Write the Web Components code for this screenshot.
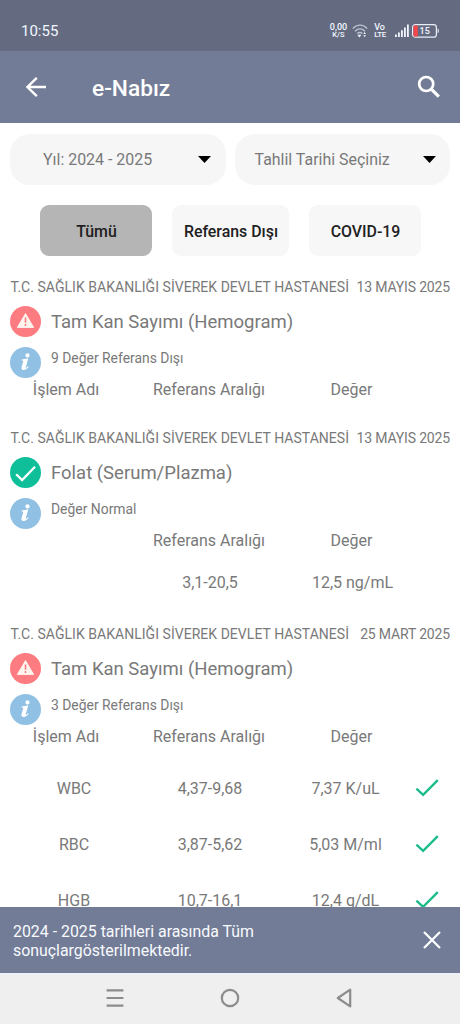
<!DOCTYPE html>
<html lang="tr">
<head>
<meta charset="UTF-8">
<meta name="viewport" content="width=device-width, initial-scale=1">
<title>e-Nabız</title>
<style>
    body {
        margin: 0;
        height: 1024px;
        overflow: hidden;
        background: #fff;
        color: #797979;
        font-family: Roboto, "Liberation Sans", sans-serif;
    }
</style>
</head>
<body>
<nabiz-app>
    <status-bar slot="top" time="10:55"></status-bar>
    <app-bar slot="top">e-Nabız</app-bar>

    <select-box slot="filters" style="--w: 216px; --pad: 33px; --caret: 15px">Yıl: 2024 - 2025</select-box>
    <select-box slot="filters" style="--w: 215px; --pad: 19.5px; --caret: 14px">Tahlil Tarihi Seçiniz</select-box>

    <filter-chip slot="chips" active style="--w: 112px">Tümü</filter-chip>
    <filter-chip slot="chips" style="--w: 117px">Referans Dışı</filter-chip>
    <filter-chip slot="chips" style="--w: 112px">COVID-19</filter-chip>

    <result-card hospital="T.C. SAĞLIK BAKANLIĞI SİVEREK DEVLET HASTANESİ" date="13 MAYIS 2025"
        name="Tam Kan Sayımı (Hemogram)" note="9 Değer Referans Dışı" state="warn" first-col="İşlem Adı"></result-card>

    <result-card hospital="T.C. SAĞLIK BAKANLIĞI SİVEREK DEVLET HASTANESİ" date="13 MAYIS 2025"
        name="Folat (Serum/Plazma)" note="Değer Normal" state="ok">
        <result-row range="3,1-20,5" value="12,5 ng/mL" style="--row: 28px; --shift: 18px; --value: 161px"></result-row>
    </result-card>

    <result-card hospital="T.C. SAĞLIK BAKANLIĞI SİVEREK DEVLET HASTANESİ" date="25 MART 2025"
        name="Tam Kan Sayımı (Hemogram)" note="3 Değer Referans Dışı" state="warn" first-col="İşlem Adı">
        <result-row name="WBC" range="4,37-9,68" value="7,37 K/uL" checked style="--shift: 13px"></result-row>
        <result-row name="RBC" range="3,87-5,62" value="5,03 M/ml" checked></result-row>
        <result-row name="HGB" range="10,7-16,1" value="12,4 g/dL" checked></result-row>
    </result-card>

    <snack-bar slot="bottom">2024 - 2025 tarihleri arasında Tüm sonuçlargösterilmektedir.</snack-bar>
    <nav-bar slot="bottom"></nav-bar>
</nabiz-app>

<script>
/**
 * e-Nabız - Lab results screen
 */

const icons = {
    warn: `<svg width="31" height="31" viewBox="0 0 31 31">
        <circle cx="15.5" cy="15.5" r="15.5" fill="#fd7c81"/>
        <path d="M15.5 7.6 23.6 21.4H7.4Z" fill="#fff4ee" stroke="#fff4ee" stroke-width="1" stroke-linejoin="round"/>
        <path d="M15.5 11.6v5.2M15.5 18.1v1.8" stroke="#fd7c81" stroke-width="1.6"/>
    </svg>`,
    ok: `<svg width="31" height="31" viewBox="0 0 31 31">
        <circle cx="15.5" cy="15.5" r="15.5" fill="#0fbf9a"/>
        <path d="M6.2 17.2l5.9 5.8L25 9.8" fill="none" stroke="#fff" stroke-width="2.3"/>
    </svg>`,
    info: `<svg width="31" height="31" viewBox="0 0 31 31">
        <circle cx="15.5" cy="15.5" r="15.5" fill="#90c0e3"/>
        <circle cx="17.5" cy="8.4" r="2.1" fill="#fff"/>
        <path d="M11.6 12.4c2.2-.1 4.4-.5 6.7-1.1l-2.6 9.2c-.1.7.4.6.9.1l1.4-1.4.7.6c-1.4 2-3.1 3.2-5 3.2-1.9 0-2.6-1-2.2-2.7l1.7-5.7c.2-.9-.3-1.1-1.6-1.2z" fill="#fff"/>
    </svg>`,
    check: `<svg width="24" height="20" viewBox="0 0 24 20">
        <path d="M1.4 10.6l6.7 6.2L22.8 2.2" fill="none" stroke="#1cbc8c" stroke-width="2.4"/>
    </svg>`
};

class StatusBar extends HTMLElement {
    constructor() {
        super();
        this.attachShadow({ mode: 'open' });
    }

    connectedCallback() {
        this.shadowRoot.innerHTML = `
            <style>
                :host {
                    display: flex;
                    align-items: center;
                    box-sizing: border-box;
                    height: 51px;
                    padding: 10px 20px 0 21px;
                    background: #646b80;
                    color: #f2f7ff;
                }
                .time { flex: 1; font-size: 15px; }
                .pair {
                    display: flex;
                    flex-direction: column;
                    align-items: center;
                    font-size: 9px;
                    line-height: 8px;
                    font-weight: 500;
                }
                .small { font-size: 7.5px; }
                .lte { align-items: flex-start; margin: 0 9px 0 6px; }
                .lte .small { font-size: 8px; letter-spacing: -0.3px; }
                .wifi { margin-left: 5px; }
                .battery { margin-left: 3px; }
                svg { display: block; }
            </style>
            <span class="time">${this.getAttribute('time')}</span>
            <div class="pair"><span>0,00</span><span class="small">K/S</span></div>
            <svg class="wifi" width="16" height="14" viewBox="0 0 16 14" fill="none" stroke="#b9c0d2" stroke-width="1.4">
                <path d="M.8 4.6C5-.1 11-.1 15.2 4.6M3 7.2c3-3 7-3 10 0M5.2 9.6c1.6-1.5 3.8-1.5 5.2 0"/>
                <path d="M5.4 10.8h4L7.4 13.6ZM11.3 10l1.3-2 1.3 2ZM11.3 11.3l1.3 2 1.3-2Z" fill="#f2f7ff" stroke="none"/>
            </svg>
            <div class="pair lte"><span>Vo</span><span class="small">LTE</span></div>
            <svg width="14" height="13" viewBox="0 0 14 13" fill="#f2f7ff">
                <path d="M0 10.4h1.8V13H0ZM3 8.4h1.8V13H3ZM6 6.2h1.8V13H6ZM9 3.5h1.8V13H9ZM12 .5h1.8V13H12Z"/>
            </svg>
            <svg class="battery" width="28" height="14" viewBox="0 0 28 14">
                <rect x=".6" y=".6" width="23.8" height="12.6" rx="2.8" fill="none" stroke="#e9edf7" stroke-width="1.2"/>
                <path d="M2.5 1.5h3.3v10.9H2.5c-.8 0-1-.5-1-1V2.5c0-.6.4-1 1-1Z" fill="#f2474b"/>
                <path d="M25.6 4.5c1.6.4 1.6 4.4 0 4.8Z" fill="#e9edf7"/>
                <text x="12.7" y="10.2" font-size="9" font-weight="500" text-anchor="middle" fill="#f2f7ff">15</text>
            </svg>
        `;
    }
}

class AppBar extends HTMLElement {
    constructor() {
        super();
        this.attachShadow({ mode: 'open' });
        this.shadowRoot.innerHTML = `
            <style>
                :host {
                    display: flex;
                    align-items: center;
                    box-sizing: border-box;
                    height: 72px;
                    padding: 0 19px 0 25px;
                    background: #737c96;
                    color: #fff;
                }
                .title {
                    flex: 1;
                    margin: 2px 0 0 45px;
                    font-size: 22.7px;
                    font-weight: 500;
                }
                svg { display: block; }
            </style>
            <svg width="22" height="22" viewBox="0 0 22 22" fill="none" stroke="#fff" stroke-width="2.4">
                <path d="M21 11H2.6M11.8 1.8 2.4 11l9.4 9.2"/>
            </svg>
            <span class="title"><slot></slot></span>
            <svg width="24" height="24" viewBox="0 0 24 24" fill="none" stroke="#fff">
                <circle cx="9.2" cy="9" r="7" stroke-width="2.7"/>
                <path d="M14.3 14.1 21.8 21.6" stroke-width="3.2"/>
            </svg>
        `;
    }
}

class SelectBox extends HTMLElement {
    constructor() {
        super();
        this.attachShadow({ mode: 'open' });
        this.shadowRoot.innerHTML = `
            <style>
                :host {
                    display: flex;
                    align-items: center;
                    justify-content: space-between;
                    box-sizing: border-box;
                    width: var(--w);
                    height: 51px;
                    padding: 0 var(--caret) 0 var(--pad);
                    border-radius: 20px;
                    background: #f6f6f6;
                    font-size: 15.95px;
                    white-space: nowrap;
                }
            </style>
            <slot></slot>
            <svg width="13" height="7" viewBox="0 0 13 7"><path d="M0 0h13L6.5 7Z" fill="#000"/></svg>
        `;
    }
}

class FilterChip extends HTMLElement {
    constructor() {
        super();
        this.attachShadow({ mode: 'open' });
        this.shadowRoot.innerHTML = `
            <style>
                :host {
                    display: flex;
                    align-items: center;
                    justify-content: center;
                    box-sizing: border-box;
                    width: var(--w);
                    height: 51px;
                    padding: 2px 0 0 1px;
                    border-radius: 9px;
                    background: #f7f7f7;
                    color: #212121;
                    font-size: 15.9px;
                    font-weight: 500;
                    white-space: nowrap;
                }
                :host([active]) { background: #b5b5b5; }
            </style>
            <slot></slot>
        `;
    }
}

class ResultRow extends HTMLElement {
    constructor() {
        super();
        this.attachShadow({ mode: 'open' });
    }

    connectedCallback() {
        const get = key => this.getAttribute(key) || '';
        this.shadowRoot.innerHTML = `
            <style>
                :host {
                    display: grid;
                    grid-template-columns: 148px 124px var(--value, 147px) 1fr;
                    align-items: center;
                    height: var(--row, 56px);
                    margin-top: var(--shift, 0);
                    font-size: 16px;
                    text-align: center;
                    white-space: nowrap;
                }
                .mark { margin-left: -4px; }
                svg { display: block; }
            </style>
            <span>${get('name')}</span>
            <span>${get('range')}</span>
            <span>${get('value')}</span>
            <span class="mark">${this.hasAttribute('checked') ? icons.check : ''}</span>
        `;
    }
}

class ResultCard extends HTMLElement {
    constructor() {
        super();
        this.attachShadow({ mode: 'open' });
    }

    connectedCallback() {
        const get = key => this.getAttribute(key) || '';
        this.shadowRoot.innerHTML = `
            <style>
                :host { display: block; white-space: nowrap; }
                .head {
                    display: flex;
                    justify-content: space-between;
                    padding: 0 10px 0 10.5px;
                    height: 20px;
                    line-height: 21px;
                    font-size: 14px;
                }
                .hospital { letter-spacing: 0.035px; }
                .date { letter-spacing: -0.16px; }
                .line {
                    display: flex;
                    gap: 10px;
                    height: 31px;
                    padding-left: 10px;
                }
                .title { margin-top: 9px; font-size: 18.5px; line-height: 32px; }
                .note { margin-top: 10px; font-size: 13.9px; line-height: 22px; }
                .cols {
                    display: grid;
                    grid-template-columns: 132px 154px 131px;
                    height: 22px;
                    line-height: 23px;
                    font-size: 16px;
                    text-align: center;
                }
                svg { display: block; }
            </style>
            <div class="head"><span class="hospital">${get('hospital')}</span><span class="date">${get('date')}</span></div>
            <div class="line title">${icons[get('state')]}<span>${get('name')}</span></div>
            <div class="line note">${icons.info}<span>${get('note')}</span></div>
            <div class="cols"><span>${get('first-col')}</span><span>Referans Aralığı</span><span>Değer</span></div>
            <slot></slot>
        `;
    }
}

class SnackBar extends HTMLElement {
    constructor() {
        super();
        this.attachShadow({ mode: 'open' });
        this.shadowRoot.innerHTML = `
            <style>
                :host {
                    display: flex;
                    align-items: center;
                    justify-content: space-between;
                    box-sizing: border-box;
                    height: 66px;
                    padding: 0 19px 0 13px;
                    background: #737c96;
                    color: #f7faff;
                    font-size: 15.9px;
                    line-height: 19px;
                }
                .text { width: 270px; padding-top: 2px; }
            </style>
            <span class="text"><slot></slot></span>
            <svg width="18" height="18" viewBox="0 0 18 18" stroke="#fff" stroke-width="2.2">
                <path d="M1 1 17 17M17 1 1 17"/>
            </svg>
        `;
    }
}

class NavBar extends HTMLElement {
    constructor() {
        super();
        this.attachShadow({ mode: 'open' });
        this.shadowRoot.innerHTML = `
            <style>
                :host {
                    display: flex;
                    align-items: center;
                    justify-content: space-between;
                    box-sizing: border-box;
                    height: 51px;
                    padding: 0 108px 3px 106px;
                    border-top: 2px solid #eef2f8;
                    background: #efefef;
                }
                svg { display: block; fill: none; stroke: #8c8c8c; stroke-width: 2.2; }
            </style>
            <svg width="18" height="20" viewBox="0 0 18 20"><path d="M.6 2.3h16.8M.6 10h16.8M.6 17.7h16.8"/></svg>
            <svg width="20" height="20" viewBox="0 0 20 20"><circle cx="10" cy="10" r="8.2"/></svg>
            <svg width="16" height="20" viewBox="0 0 16 20"><path d="M14.2 1.6v16.8L1.8 10Z" stroke-linejoin="round"/></svg>
        `;
    }
}

class NabizApp extends HTMLElement {
    constructor() {
        super();
        this.attachShadow({ mode: 'open' });
        this.shadowRoot.innerHTML = `
            <style>
                :host {
                    display: flex;
                    flex-direction: column;
                    width: 460px;
                    height: 1024px;
                    overflow: hidden;
                }
                .filters {
                    display: flex;
                    gap: 9px;
                    padding: 11px 10px 0;
                }
                .chips {
                    display: flex;
                    gap: 20px;
                    padding: 20px 0 0 40px;
                }
                .list {
                    flex: 1;
                    min-height: 0;
                    display: flex;
                    flex-direction: column;
                    gap: 27.5px;
                    padding-top: 21px;
                    overflow: hidden;
                }
            </style>
            <slot name="top"></slot>
            <div class="filters"><slot name="filters"></slot></div>
            <div class="chips"><slot name="chips"></slot></div>
            <div class="list"><slot></slot></div>
            <slot name="bottom"></slot>
        `;
    }
}

customElements.define('status-bar', StatusBar);
customElements.define('app-bar', AppBar);
customElements.define('select-box', SelectBox);
customElements.define('filter-chip', FilterChip);
customElements.define('result-row', ResultRow);
customElements.define('result-card', ResultCard);
customElements.define('snack-bar', SnackBar);
customElements.define('nav-bar', NavBar);
customElements.define('nabiz-app', NabizApp);
</script>
</body>
</html>
